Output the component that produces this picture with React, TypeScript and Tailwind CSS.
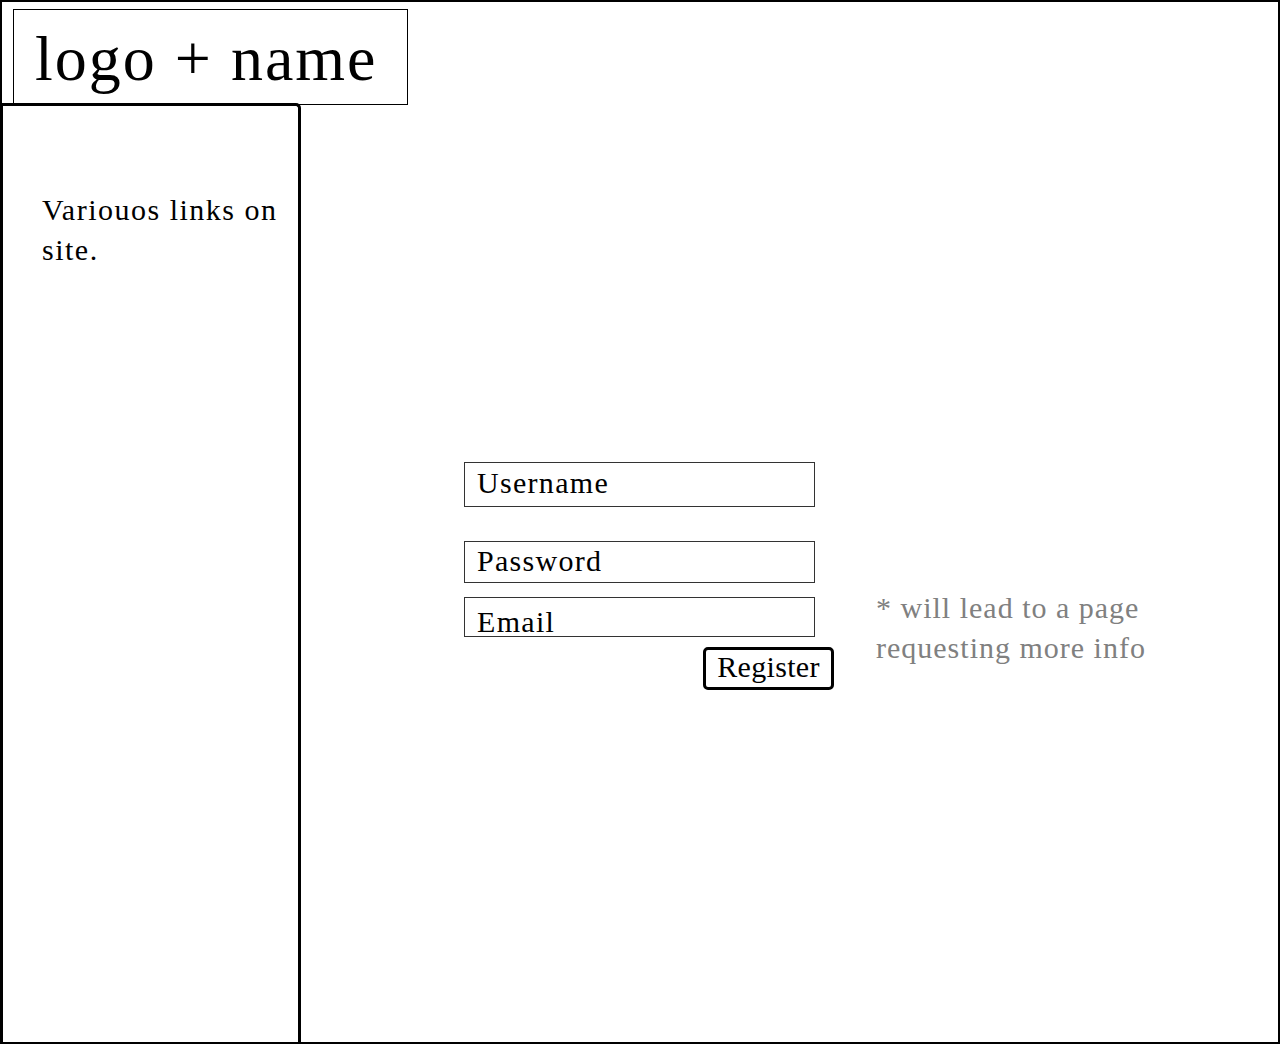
import React from "react"

const serif = { fontFamily: '"Liberation Serif", "DejaVu Serif", serif' }

function Field({ label, className }: { label: string; className: string }) {
    return (
        <div className={`w-[351px] border border-[#333] flex items-center pl-3 text-[30px] tracking-[1.3px] text-black ${className}`}>
            {label}
        </div>
    )
}

export default function App() {
    return (
        <div
            style={serif}
            className="w-[1280px] h-[1044px] border-2 border-black bg-white flex flex-col overflow-hidden"
        >
            {/* Header logo box */}
            <div className="ml-[11px] mt-[7px] w-[395px] h-[96px] border border-black flex items-center pl-[21px] pt-1 text-[64px] tracking-[2px] leading-none text-black">
                logo + name
            </div>

            <div className="flex flex-1 -mt-[2px]">
                {/* Left nav */}
                <aside className="w-[301px] -ml-[2px] border-[3px] border-b-0 border-black rounded-tr-[5px] pt-[84px] pl-[39px] pr-1 text-[30px] tracking-[1.5px] leading-[40px] text-black">
                    Variouos links on site.
                </aside>

                {/* Main */}
                <main className="flex-1 flex pl-[163px] pt-[359px]">
                    <div className="flex flex-col items-end w-[372px]">
                        <div className="flex flex-col self-start">
                            <Field label="Username" className="h-[45px] pb-1" />
                            <Field label="Password" className="h-[42px] mt-[34px] pb-1" />
                            <Field label="Email" className="h-[40px] mt-[14px] pt-2" />
                        </div>
                        <button className="mt-[10px] mr-[2px] w-[131px] h-[43px] border-[3px] border-black rounded-[5px] text-[30px] tracking-[0.3px] leading-none text-black pb-1">
                            Register
                        </button>
                    </div>
                    <p className="ml-[40px] mt-[126px] w-[320px] text-[30px] tracking-[1px] leading-[40px] text-[#808080]">
                        * will lead to a page requesting more info
                    </p>
                </main>
            </div>
        </div>
    )
}
